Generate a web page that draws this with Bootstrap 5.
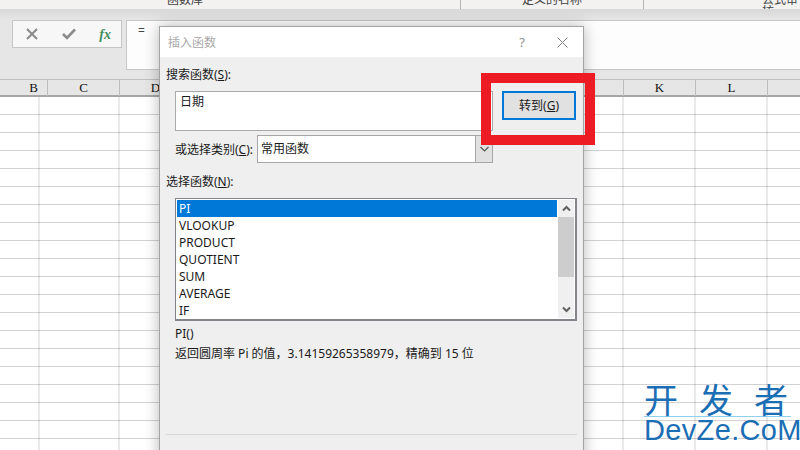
<!DOCTYPE html>
<html lang="zh">
<head>
<meta charset="utf-8">
<title>插入函数</title>
<link href="https://cdn.jsdelivr.net/npm/bootstrap@5.3.0/dist/css/bootstrap.min.css" rel="stylesheet">
<style>
html,body{margin:0;width:800px;height:450px;overflow:hidden;background:#fff;}
body{font-family:"Noto Sans","Noto Sans CJK SC",sans-serif;font-size:12px;line-height:17px;color:#1a1a1a;position:relative;}
.ribbon{height:9px;background:#f3f2f1;overflow:hidden;color:#444;}
.rib-group{height:9px;flex:none;position:relative;text-align:center;line-height:12px;margin-top:0;}
.rib-group span{position:relative;top:-6px;display:block;}
.rib-a{width:460px;padding-right:90px;padding-left:0;}
.rib-b{width:183px;border-left:1px solid #b5b3b1;}
.rib-c{flex:1;border-left:1px solid #b5b3b1;padding-left:118px;text-align:left;}
.fbar{height:71px;background:linear-gradient(#d8d8d8,#e6e6e6 11px);padding:11px 0 0 12px;gap:4px;}
.namebox{width:110px;height:28px;background:#f7f7f7;border:1px solid #c6c6c6;padding:0 10px 0 13px;}
.fx{font-family:"Liberation Serif",serif;font-style:italic;font-weight:bold;font-size:14px;color:#3f8f5f;}
.finput{flex:1;height:50px;background:#fdfdfd;border:1px solid #c6c6c6;border-right:0;padding:1px 0 0 11px;margin-top:0;color:#444;}
.colhead{height:18px;background:#e6e6e6;border-top:1px solid #c0c0c0;border-bottom:2px solid #a6a6a6;font-family:"Liberation Serif",serif;font-size:13px;line-height:15px;color:#111;margin-top:-1px;}
.colhead div{width:72px;flex:none;text-align:center;border-right:1px solid #bdbdbd;height:16px;}
.colhead .first{width:48px;padding-right:9px;padding-left:0;text-align:right;}
.sheet{height:353px;background-color:#fff;background-image:repeating-linear-gradient(#fff 0,#fff 17px,#d2d2d2 17px,#d2d2d2 18px),repeating-linear-gradient(90deg,transparent 0,transparent 71px,#d2d2d2 71px,#d2d2d2 72px);background-blend-mode:multiply;background-position:0 0,47.5px 0;}
.dialog-win{position:absolute;left:159px;top:26px;width:425px;height:440px;background:#efefef;border:1px solid #a3a3a3;box-shadow:0 0 14px rgba(0,0,0,.28);}
.dlg-title{height:30px;background:#fff;padding:0 0 0 8px;color:#a8a8a8;line-height:29px;font-size:12px;}
.dlg-help{width:20px;text-align:center;margin-left:auto;margin-right:25px;color:#909090;font-size:13px;}
.dlg-close{margin-right:15px;}
.dlg-body{padding:9px 6px 0 6px;}
.lbl{line-height:17px;}
.lbl u{text-underline-offset:1px;}
.search-row{margin:8px 0 0 9px;align-items:flex-start;}
.search-box{width:318px;height:40px;background:#fff;border:1px solid #aaa;padding:1px 4px;border-radius:0;font-size:12px;line-height:17px;resize:none;color:#1a1a1a;}
.go-btn{width:74px;height:29px;margin-left:9px;padding:0;font-size:12px;line-height:17px;border:2px solid #0078d7;background:#e1e1e1;border-radius:0;color:#1a1a1a;}
.combo-row{margin:4px 0 0 9px;align-items:center;height:28px;}
.combo-lbl{width:82px;}
.combo{width:236px;height:28px;background:#fff;border:1px solid #a6a6a6;}
.combo-txt{flex:1;padding:0 3px;line-height:26px;}
.combo-arrow{width:17px;background:#e1e1e1;border-left:1px solid #a6a6a6;}
.pick-lbl{margin-top:10px;}
.fn-box{margin:8px 0 0 9px;width:402px;height:123px;border:1px solid #82858a;padding:1px;background:#fff;border-width:1px 2px 2px 1px;}
.fn-list{width:382px;border-radius:0;}
.fn-item{border:0;padding:0 2px;height:17px;line-height:17px;font-size:12px;color:#1a1a1a;background:transparent;border-radius:0;}
.fn-item.active{background:#0078d7;color:#fff;}
.scroll{width:16px;background:#f0f0f0;margin-left:1px;}
.sc-btn{height:17px;}
.sc-thumb{height:60px;background:#cdcdcd;}
.sig{margin:4px 0 0 9px;}
.desc{margin:3px 0 0 9px;}
.dlg-rule{border-top:1px solid #d8d8d8;margin:72px 0 0 0;opacity:1;}
.red-frame{position:absolute;left:481px;top:73px;width:114px;height:72px;border:10px solid #ed1c24;}
.mark-wrap{position:absolute;left:644px;top:382px;width:147px;color:#1b6eb4;}
.mark-cn{font-family:"Noto Sans CJK SC",sans-serif;font-size:34px;line-height:34px;height:34px;letter-spacing:21px;white-space:nowrap;}
.mark-en{font-family:"Liberation Sans",sans-serif;font-size:29px;line-height:27px;border-top:1px solid #8fd0ee;white-space:nowrap;letter-spacing:.35px;}
</style>
</head>
<body>
<div class="ribbon d-flex">
  <div class="rib-group rib-a"><span>函数库</span></div>
  <div class="rib-group rib-b"><span>定义的名称</span></div>
  <div class="rib-group rib-c"><span>公式审核</span></div>
</div>
<div class="fbar d-flex align-items-start">
  <div class="namebox d-flex align-items-center justify-content-between">
    <svg width="12" height="12" viewBox="0 0 12 12"><path d="M1 1L11 11M11 1L1 11" stroke="#8a8a8a" stroke-width="2" fill="none"/></svg>
    <svg width="14" height="12" viewBox="0 0 14 12"><path d="M1 6L5 10L13 1.5" stroke="#8a8a8a" stroke-width="2.6" fill="none"/></svg>
    <span class="fx">fx</span>
  </div>
  <div class="finput">=</div>
</div>
<div class="colhead d-flex">
  <div class="first">B</div><div>C</div><div>D</div><div>E</div><div>F</div><div>G</div><div>H</div><div>I</div><div>J</div><div>K</div><div>L</div>
</div>
<div class="sheet"></div>

<div class="dialog-win">
  <div class="dlg-title d-flex align-items-center">
    <span>插入函数</span>
    <span class="dlg-help">?</span>
    <svg class="dlg-close" width="11" height="11" viewBox="0 0 11 11"><path d="M.5 .5L10.5 10.5M10.5 .5L.5 10.5" stroke="#808080" stroke-width="1" fill="none"/></svg>
  </div>
  <div class="dlg-body">
    <div class="lbl">搜索函数(<u>S</u>):</div>
    <div class="search-row d-flex">
      <div class="search-box">日期</div>
      <button type="button" class="btn go-btn">转到(<u>G</u>)</button>
    </div>
    <div class="combo-row d-flex">
      <div class="combo-lbl">或选择类别(<u>C</u>):</div>
      <div class="combo d-flex">
        <div class="combo-txt">常用函数</div>
        <div class="combo-arrow d-flex align-items-center justify-content-center">
          <svg width="9" height="6" viewBox="0 0 9 6"><path d="M.5 1L4.5 5L8.5 1" stroke="#555" stroke-width="1.2" fill="none"/></svg>
        </div>
      </div>
    </div>
    <div class="lbl pick-lbl">选择函数(<u>N</u>):</div>
    <div class="fn-box d-flex">
      <div class="list-group fn-list">
        <div class="list-group-item fn-item active">PI</div>
        <div class="list-group-item fn-item">VLOOKUP</div>
        <div class="list-group-item fn-item">PRODUCT</div>
        <div class="list-group-item fn-item">QUOTIENT</div>
        <div class="list-group-item fn-item">SUM</div>
        <div class="list-group-item fn-item">AVERAGE</div>
        <div class="list-group-item fn-item">IF</div>
      </div>
      <div class="scroll d-flex flex-column">
        <div class="sc-btn d-flex align-items-center justify-content-center">
          <svg width="9" height="7" viewBox="0 0 9 7"><path d="M1 5.5L4.5 2L8 5.5" stroke="#606060" stroke-width="2" fill="none"/></svg>
        </div>
        <div class="sc-thumb"></div>
        <div class="sc-btn d-flex align-items-center justify-content-center mt-auto">
          <svg width="9" height="7" viewBox="0 0 9 7"><path d="M1 1.5L4.5 5L8 1.5" stroke="#606060" stroke-width="2" fill="none"/></svg>
        </div>
      </div>
    </div>
    <div class="sig">PI()</div>
    <div class="desc">返回圆周率 Pi 的值，3.14159265358979，精确到 15 位</div>
    <hr class="dlg-rule">
  </div>
</div>

<div class="red-frame"></div>

<div class="mark-wrap">
  <div class="mark-cn">开发者</div>
  <div class="mark-en">DevZe.CoM</div>
</div>
</body>
</html>
